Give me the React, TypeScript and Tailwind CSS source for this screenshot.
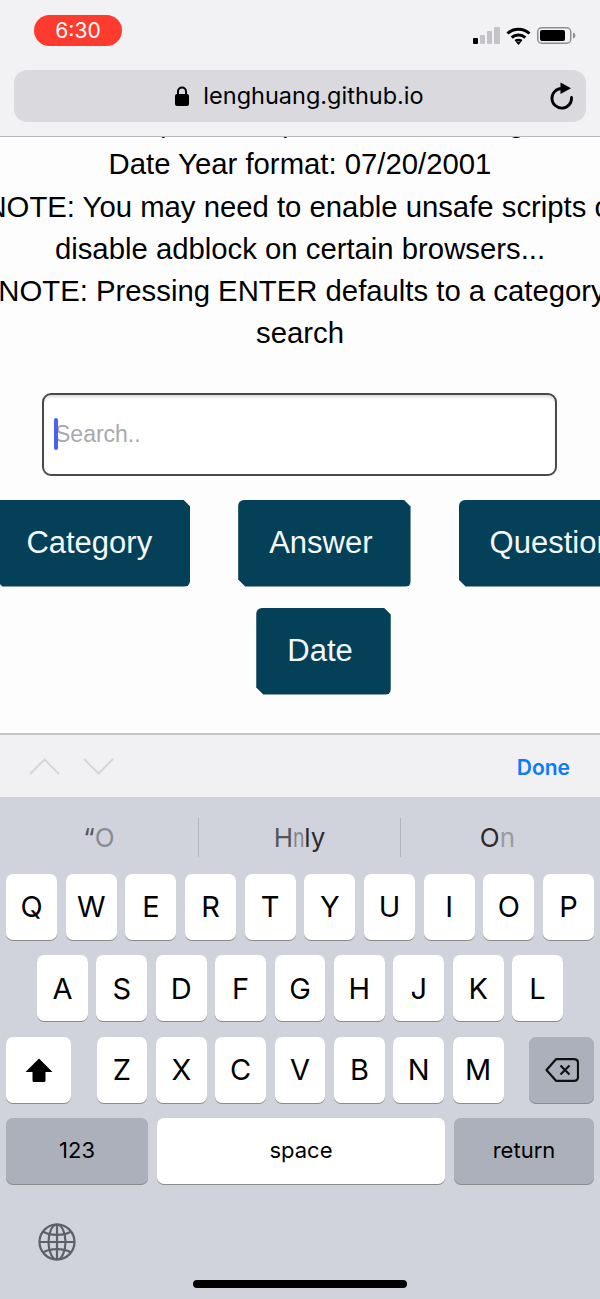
const chromeFont = "font-['Inter','Noto_Sans',sans-serif]";

const rowOne = ['Q', 'W', 'E', 'R', 'T', 'Y', 'U', 'I', 'O', 'P'];
const rowTwo = ['A', 'S', 'D', 'F', 'G', 'H', 'J', 'K', 'L'];
const rowThree = ['Z', 'X', 'C', 'V', 'B', 'N', 'M'];

const Key = ({ label }: { label: string }) => (
  <div className="flex h-[66px] flex-1 items-center justify-center rounded-[7px] bg-white text-[29px] text-black shadow-[0_1px_0_#8a8b8f]">
    {label}
  </div>
);

const SignalBars = () => (
  <svg width="27" height="17" viewBox="0 0 27 17">
    <rect x="0" y="11" width="5" height="6" rx="1" fill="#000" />
    <rect x="7" y="8" width="5" height="9" rx="1" fill="#c4c4c8" />
    <rect x="14" y="4" width="5" height="13" rx="1" fill="#c4c4c8" />
    <rect x="21" y="0" width="6" height="17" rx="1" fill="#c4c4c8" />
  </svg>
);

const Wifi = () => (
  <svg width="25" height="18" viewBox="0 0 25 18" fill="none" stroke="#000" strokeWidth="3">
    <path d="M1.5 6.5C7.5 .8 17.5 .8 23.5 6.5" />
    <path d="M5.7 10.6C9.5 7 15.5 7 19.3 10.6" />
    <path d="M9.3 14C11 12.6 14 12.6 15.7 14" strokeWidth="2.5" />
    <path d="M12.5 18l-3-3.4h6z" fill="#000" stroke="none" />
  </svg>
);

const Battery = () => (
  <svg width="39" height="17" viewBox="0 0 39 17">
    <rect x="0.75" y="0.75" width="33" height="15.5" rx="4" fill="none" stroke="#8e8e92" strokeWidth="1.5" />
    <rect x="3" y="3" width="25" height="11" rx="2" fill="#000" />
    <path d="M36 5.5c1.6.5 2.4 1.6 2.4 3s-.8 2.5-2.4 3z" fill="#8e8e92" />
  </svg>
);

const Lock = () => (
  <svg width="14" height="20" viewBox="0 0 14 20">
    <path d="M3 9V5.500a4 4 0 0 1 8 0V9" fill="none" stroke="#000" strokeWidth="2" />
    <rect x="0" y="8" width="14" height="12" rx="2" fill="#000" />
  </svg>
);

const Reload = () => (
  <svg width="24" height="28" viewBox="0 0 24 28" fill="none">
    <path d="M21.500 15.500A9.800 9.800 0 1 1 11.500 6.500" stroke="#000" strokeWidth="2.800" strokeLinecap="round" />
    <path d="M10.500 0.500L21 6.300L10.500 12z" fill="#000" />
  </svg>
);

const ShiftIcon = () => (
  <svg width="28" height="24" viewBox="0 0 28 24">
    <path d="M14 0.500L27.500 14H20.500V22.500Q20.500 24 19 24H9Q7.500 24 7.500 22.500V14H0.500z" fill="#000" />
  </svg>
);

const DeleteIcon = () => (
  <svg width="34" height="26" viewBox="0 0 34 26" fill="none" stroke="#111" strokeWidth="2.200">
    <path d="M1.500 13L11 2.200H29Q33 2.200 33 6V20Q33 23.800 29 23.800H11z" strokeLinejoin="round" />
    <path d="M15.500 8.500L24.500 17.500M24.500 8.500L15.500 17.500" />
  </svg>
);

const GlobeIcon = () => (
  <svg width="38" height="38" viewBox="0 0 38 38" fill="none" stroke="#5f6066" strokeWidth="2.200">
    <circle cx="19" cy="19" r="17.500" />
    <ellipse cx="19" cy="19" rx="8.500" ry="17.500" />
    <path d="M19 1.500V36.500M1.500 19H36.500" />
    <path d="M5 8.500C12 13 26 13 33 8.500M5 29.500C12 25 26 25 33 29.500" />
  </svg>
);

const PageButton = ({ label }: { label: string }) => (
  <button className="flex h-[87px] items-center rounded-[6px] bg-[#044058] pl-[31px] pr-[38px] pt-[1px] text-[31px] text-[#f4f8fa] [clip-path:polygon(0_0,calc(100%_-_7px)_0,100%_7px,100%_100%,7px_100%,0_calc(100%_-_7px))]">
    {label}
  </button>
);

export default function App() {
  return (
    <div className="flex h-[1299px] w-[600px] flex-col overflow-hidden bg-[#fefdfe]">
      {/* safari chrome */}
      <div className={`relative z-10 h-[137px] shrink-0 border-b border-[#b9b9bc] bg-[#f2f1f4] px-[14px] pt-[15px] ${chromeFont}`}>
        <div className="flex h-[31px] items-center justify-between pl-[20px] pr-[10px]">
          <div className="flex h-[31px] w-[88px] items-center justify-center rounded-[16px] bg-[#ff3b30] text-[21px] text-white">
            6:30
          </div>
          <div className="mt-[10px] flex items-center gap-[6px]">
            <SignalBars />
            <Wifi />
            <Battery />
          </div>
        </div>
        <div className="relative mt-[24px] flex h-[52px] items-center justify-center rounded-[13px] bg-[#d9d9de] pr-[1px]">
          <div className="flex items-center gap-[14px]">
            <Lock />
            <span className="text-[23.500px] text-black">lenghuang.github.io</span>
          </div>
          <div className="absolute right-[12px] top-[12px]">
            <Reload />
          </div>
        </div>
      </div>

      {/* page content */}
      <div className="h-[596px] shrink-0 overflow-hidden font-['Liberation_Sans',Arial,sans-serif]">
        <div className="-mt-[36px] flex flex-col items-center whitespace-nowrap text-[29.300px] leading-[42.25px] text-black">
          <p>Enter an input, then press a button to go on</p>
          <p>Date Year format: 07/20/2001</p>
          <p className="pl-[6px]">NOTE: You may need to enable unsafe scripts or</p>
          <p>disable adblock on certain browsers...</p>
          <p className="pl-[4px]">NOTE: Pressing ENTER defaults to a category</p>
          <p>search</p>
        </div>

        <div className="relative ml-[42px] mr-[43px] mt-[38px]">
          <input
            readOnly
            placeholder="Search.."
            className="h-[83px] w-full rounded-[9px] border-2 border-[#4a4a4e] bg-white pl-[11px] text-[23px] shadow-[inset_0_3px_3px_-1px_rgba(0,0,0,0.15)] outline-none placeholder:text-[#a9a9b0]"
          />
          <div className="absolute left-[12px] top-[25px] h-[32px] w-[3.500px] rounded-[2px] bg-[#4a63ee]" />
        </div>

        <div className="-ml-[5px] mt-[24px] flex w-[657px] flex-wrap justify-center gap-x-[48px] gap-y-[21px]">
          <PageButton label="Category" />
          <PageButton label="Answer" />
          <PageButton label="Question" />
          <PageButton label="Date" />
        </div>
      </div>

      {/* accessory bar */}
      <div className={`flex h-[64px] shrink-0 items-center justify-between border-t-2 border-[#c6c6ca] bg-[#f1f1f3] pl-[29px] pr-[30px] ${chromeFont}`}>
        <div className="flex items-center gap-[23px]">
          <svg width="31" height="17" viewBox="0 0 31 17" fill="none" stroke="#d6d6da" strokeWidth="2">
            <path d="M1 16L15.500 1.500L30 16" />
          </svg>
          <svg width="31" height="17" viewBox="0 0 31 17" fill="none" stroke="#d6d6da" strokeWidth="2">
            <path d="M1 1L15.500 15.500L30 1" />
          </svg>
        </div>
        <span className="mt-[3px] text-[21px] font-semibold text-[#0a7aff]">Done</span>
      </div>

      {/* keyboard */}
      <div className={`relative flex-1 bg-[#d0d3db] ${chromeFont}`}>
        <div className="mt-[21px] grid h-[35px] grid-cols-[198px_202px_200px] text-[26px] text-[#2c2c30]">
          <div className="flex items-center justify-center">
            <span className="text-[#55565a]">“</span>
            <span className="text-[#8a8b92]">O</span>
          </div>
          <div className="flex items-center justify-center border-l border-[#b4b6be]">
            <span className="text-[#55565a]">H</span>
            <span className="-mx-[2px] inline-block scale-x-75 text-[#85868d]">n</span>
            <span className="text-[#2c2c30]">ly</span>
          </div>
          <div className="flex items-center justify-center border-l border-[#b4b6be] pr-[6px]">
            <span className="text-[#2c2c30]">O</span>
            <span className="text-[#9a9ba2]">n</span>
          </div>
        </div>

        <div className="mt-[21px] flex flex-col gap-[15.300px]">
          <div className="flex gap-[8.500px] px-[6px]">
            {rowOne.map((k) => (
              <Key key={k} label={k} />
            ))}
          </div>
          <div className="flex gap-[8.500px] px-[37px]">
            {rowTwo.map((k) => (
              <Key key={k} label={k} />
            ))}
          </div>
          <div className="flex justify-between px-[6px]">
            <div className="flex h-[66px] w-[65px] items-center justify-center rounded-[7px] bg-white shadow-[0_1px_0_#8a8b8f]">
              <ShiftIcon />
            </div>
            <div className="flex w-[407px] gap-[8.500px]">
              {rowThree.map((k) => (
                <Key key={k} label={k} />
              ))}
            </div>
            <div className="flex h-[66px] w-[65px] items-center justify-center rounded-[7px] bg-[#acb0bb] shadow-[0_1px_0_#8a8b8f]">
              <DeleteIcon />
            </div>
          </div>
          <div className="flex gap-[9px] px-[6px] text-[22px] text-black">
            <div className="flex h-[66px] w-[142px] items-center justify-center rounded-[7px] bg-[#acb0bb] shadow-[0_1px_0_#8a8b8f]">
              123
            </div>
            <div className="flex h-[66px] flex-1 items-center justify-center rounded-[7px] bg-white shadow-[0_1px_0_#8a8b8f]">
              space
            </div>
            <div className="flex h-[66px] w-[140px] items-center justify-center rounded-[7px] bg-[#acb0bb] shadow-[0_1px_0_#8a8b8f]">
              return
            </div>
          </div>
        </div>

        <div className="mt-[39px] pl-[38px]">
          <GlobeIcon />
        </div>
        <div className="absolute bottom-[11px] left-[193px] h-[8px] w-[214px] rounded-full bg-black" />
      </div>
    </div>
  );
}
